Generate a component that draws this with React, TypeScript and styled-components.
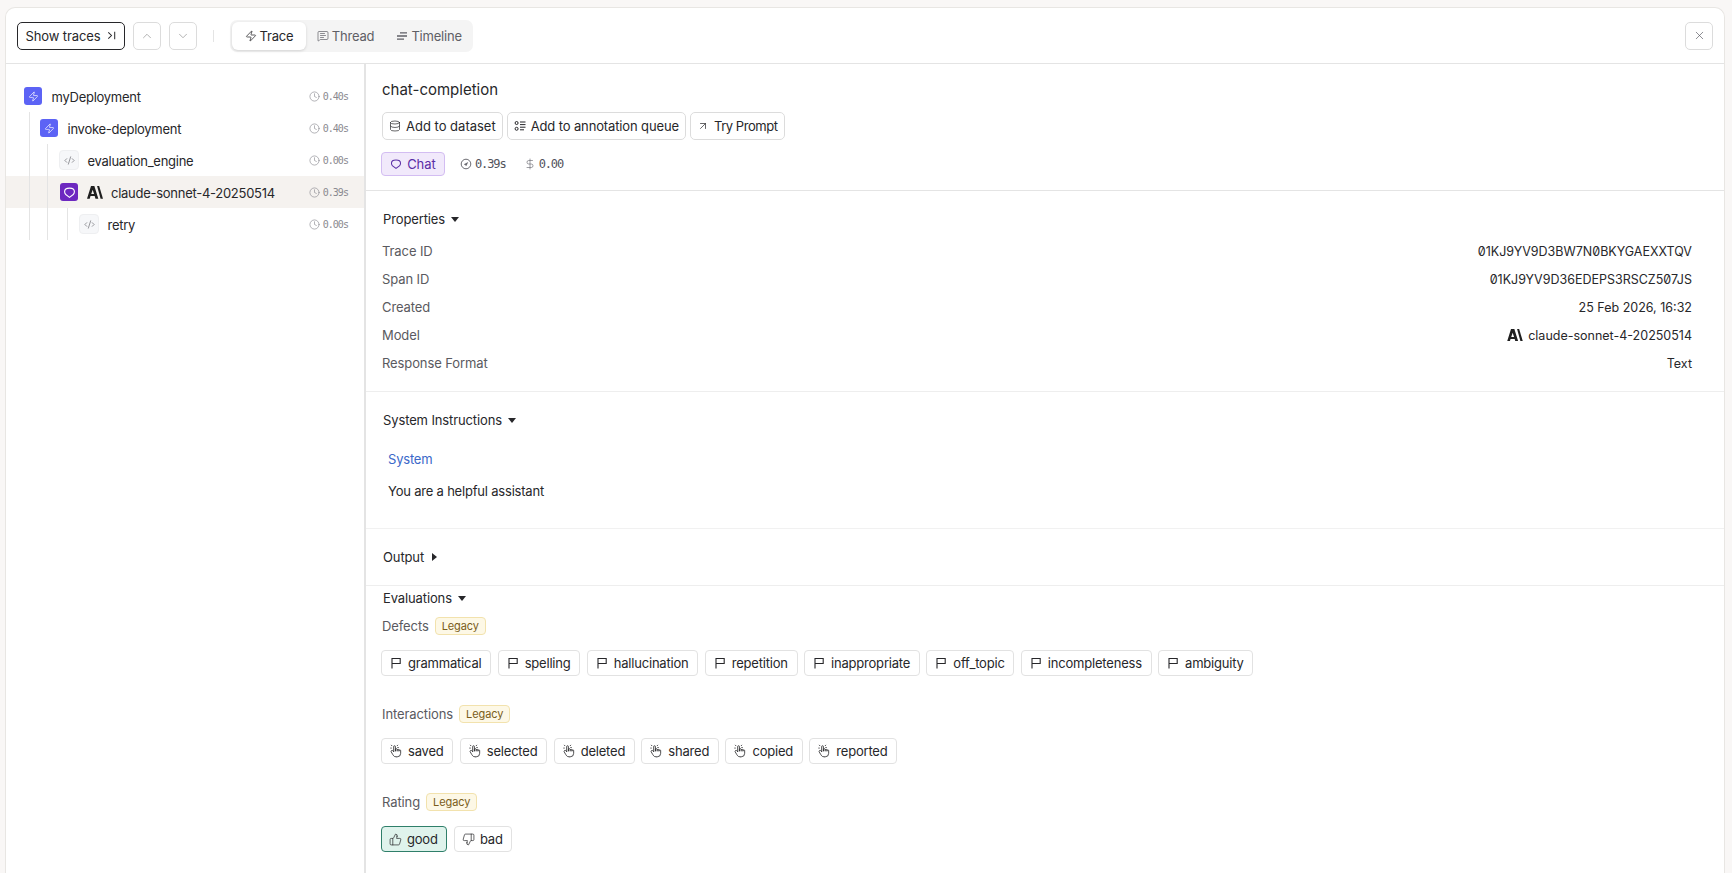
import React from "react";
import styled, { createGlobalStyle } from "styled-components";
import {
  ChevronUp, ChevronDown, X, Zap, MessageSquareText, Database, ArrowUpRight,
  Clock, ThumbsUp, ThumbsDown, CodeXml, DollarSign,
} from "lucide-react";
import { TbHandClick } from "react-icons/tb";

const SANS = `Inter, "Noto Sans", sans-serif`;
const MONO = `"DejaVu Sans Mono", "Liberation Mono", monospace`;

const Global = createGlobalStyle`
  * { box-sizing: border-box; }
  html, body { margin: 0; height: 100%; background: #f9f7f6; overflow: hidden; }
  body { font-family: ${SANS}; color: #27272a; }
`;

const Page = styled.div`
  height: 873px;
  padding: 7px 7px 0 5px;
`;
const Panel = styled.div`
  height: 866px;
  background: #fff;
  border: 1px solid #e8e6e3;
  border-bottom: none;
  border-radius: 10px 10px 0 0;
  display: flex;
  flex-direction: column;
  overflow: hidden;
`;
const TopBar = styled.header`
  height: 56px;
  flex: none;
  border-bottom: 1px solid #e4e4e4;
  display: flex;
  align-items: center;
  padding: 0 11px 0 11px;
`;
const ShowTraces = styled.button`
  height: 28px;
  width: 108px;
  border: 1px solid #27272a;
  border-radius: 5px;
  background: #fff;
  font: 13px ${SANS};
  letter-spacing: -0.1px;
  color: #27272a;
  display: flex;
  align-items: center;
  justify-content: center;
  gap: 5px;
  padding: 0;
`;
const IconButton = styled.button`
  width: 28px;
  height: 28px;
  border: 1px solid #dcdcdc;
  border-radius: 5px;
  background: #fff;
  color: #9a9a9a;
  display: flex;
  align-items: center;
  justify-content: center;
  padding: 0;
  margin-left: 8px;
`;
const CloseButton = styled(IconButton)`
  margin-left: auto;
  color: #52525b;
`;
const VSep = styled.div`
  width: 1px;
  height: 12px;
  background: #e4e4e4;
  margin: 0 16px;
`;
const Tabs = styled.div`
  display: flex;
  align-items: center;
  height: 32px;
  background: #f4f4f4;
  border-radius: 7px;
  padding: 2px;
  width: 243px;
`;
const Tab = styled.div<{ $active?: boolean }>`
  height: 28px;
  display: flex;
  align-items: center;
  gap: 3px;
  padding: 0 ${(p) => (p.$active ? "12.5px" : "11px")};
  border-radius: 6px;
  font-size: 13px;
  letter-spacing: -0.2px;
  color: ${(p) => (p.$active ? "#27272a" : "#5f5f66")};
  background: ${(p) => (p.$active ? "#fff" : "transparent")};
  box-shadow: ${(p) => (p.$active ? "0 1px 3px rgba(0,0,0,.14)" : "none")};
`;
const Body = styled.div`
  flex: 1;
  display: flex;
  min-height: 0;
`;
const TreePane = styled.aside`
  width: 360px;
  flex: none;
  border-right: 2px solid #e4e4e4;
  padding-top: 16px;
  position: relative;
`;
const TreeLine = styled.div<{ $x: number; $top: number }>`
  position: absolute;
  left: ${(p) => p.$x}px;
  top: ${(p) => p.$top}px;
  bottom: calc(100% - 176px);
  width: 1px;
  background: #e4e4e4;
`;
const TreeRow = styled.div<{ $depth: number; $selected?: boolean }>`
  height: 32px;
  display: flex;
  align-items: center;
  padding-left: ${(p) => p.$depth}px;
  padding-right: 16px;
  background: ${(p) => (p.$selected ? "#f5f2ef" : "transparent")};
`;
const SpanIcon = styled.div<{ $kind: "agent" | "code" | "llm" }>`
  width: ${(p) => (p.$kind === "code" ? 20 : 18)}px;
  height: ${(p) => (p.$kind === "code" ? 20 : 18)}px;
  margin-right: ${(p) => (p.$kind === "agent" ? 1 : 0)}px;
  flex: none;
  border-radius: ${(p) => (p.$kind === "code" ? 4 : 3)}px;
  display: flex;
  align-items: center;
  justify-content: center;
  background: ${(p) => (p.$kind === "agent" ? "#5c63f5" : p.$kind === "llm" ? "#6d28c0" : "#f6f7f9")};
  border: 1px solid ${(p) => (p.$kind === "code" ? "#eeeff1" : "transparent")};
  color: ${(p) => (p.$kind === "code" ? "#55555c" : "#fff")};
`;
const SpanName = styled.span`
  display: inline-flex;
  font-size: 13px;
  letter-spacing: -0.27px;
  line-height: 18px;
  padding-top: 1px;
  color: #27272a;
  margin-left: 8.5px;
`;
const Duration = styled.span`
  margin-left: auto;
  display: flex;
  align-items: center;
  gap: 3px;
  font: 10px ${MONO};
  letter-spacing: -0.95px;
  color: #8a8a90;
`;
const Details = styled.main`
  flex: 1;
  min-width: 0;
`;
const Head = styled.section`
  height: 127px;
  border-bottom: 1px solid #e4e4e4;
  padding: 16px 16px 0 16px;
`;
const Title = styled.div`
  font-size: 15px;
  line-height: 20px;
  color: #27272a;
`;
const ActionRow = styled.div`
  display: flex;
  gap: 4px;
  margin-top: 12px;
`;
const Action = styled.button<{ $track?: number }>`
  height: 28px;
  border: 1px solid #dcdcdc;
  border-radius: 5px;
  background: #fff;
  display: flex;
  align-items: center;
  gap: 5px;
  padding: 0 6px 0 6px;
  font: 13px ${SANS};
  letter-spacing: ${(p) => p.$track ?? 0}px;
  color: #27272a;
`;
const MetaRow = styled.div`
  display: flex;
  align-items: center;
  margin-top: 12px;
  margin-left: -1px;
  font: 12px ${MONO};
  letter-spacing: -1.1px;
  color: #52525b;
`;
const ChatChip = styled.div`
  height: 24px;
  width: 64px;
  border: 1px solid #d3bdf2;
  background: #f1e9fb;
  border-radius: 4px;
  display: flex;
  align-items: center;
  justify-content: center;
  gap: 5px;
  font: 13px ${SANS};
  letter-spacing: 0;
  color: #5b2ea6;
  margin-right: 15px;
`;
const Meta = styled.span`
  display: flex;
  align-items: center;
  gap: 3px;
  margin-right: 18px;
  svg { color: #6b6b72; }
`;
const Section = styled.section<{ $h: number; $faint?: boolean; $none?: boolean }>`
  height: ${(p) => p.$h}px;
  border-bottom: ${(p) => (p.$none ? "none" : `1px solid ${p.$faint ? "#f1f1f1" : "#eeeeee"}`)};
  padding: 0 32px 0 16px;
`;
const SectionHead = styled.div<{ $pt: number }>`
  display: flex;
  align-items: center;
  gap: 6px;
  padding: ${(p) => p.$pt}px 0 0 1px;
  font-size: 13px;
  letter-spacing: -0.12px;
  line-height: 18px;
  color: #27272a;
`;
const Caret = styled.span<{ $right?: boolean }>`
  width: 0;
  height: 0;
  ${(p) =>
    p.$right
      ? "border-top: 4.5px solid transparent; border-bottom: 4.5px solid transparent; border-left: 5px solid #27272a; margin-left: 2px;"
      : "border-left: 4.5px solid transparent; border-right: 4.5px solid transparent; border-top: 5px solid #27272a;"}
`;
const PropList = styled.div`
  margin-top: 9px;
`;
const PropRow = styled.div`
  height: 28px;
  display: flex;
  align-items: center;
  justify-content: space-between;
  font-size: 13px;
  letter-spacing: -0.1px;
  color: #5a5a60;
`;
const PropValue = styled.span<{ $id?: boolean }>`
  display: flex;
  align-items: center;
  gap: 5px;
  color: #27272a;
  font-size: 12.5px;
  letter-spacing: 0;
  ${(p) => (p.$id ? `font-feature-settings: "zero" 1;` : "")}
`;
const SystemBlock = styled.div`
  padding: 21px 0 0 6px;
  font-size: 13px;
  letter-spacing: -0.2px;
`;
const RoleLabel = styled.div`
  color: #3b68c9;
  line-height: 18px;
`;
const Message = styled.div`
  color: #27272a;
  line-height: 18px;
  margin-top: 14px;
`;
const EvalGroup = styled.div<{ $mt: number }>`
  margin-top: ${(p) => p.$mt}px;
`;
const EvalHead = styled.div`
  display: flex;
  align-items: center;
  gap: 6px;
  height: 18px;
  font-size: 13px;
  letter-spacing: -0.1px;
  color: #5a5a60;
  line-height: 18px;
`;
const Legacy = styled.span`
  height: 18px;
  border: 1px solid #f2e2ad;
  background: #fdf8e6;
  color: #7a5d1a;
  border-radius: 4px;
  padding: 0 6px;
  font-size: 11px;
  line-height: 15px;
  display: inline-flex;
  align-items: center;
`;
const ChipRow = styled.div`
  display: flex;
  gap: 6.5px;
  margin-top: 15px;
  margin-left: -1px;
`;
const Chip = styled.button<{ $on?: boolean }>`
  height: 26px;
  border: 1px solid ${(p) => (p.$on ? "#2f7f6a" : "#e2e2e2")};
  background: ${(p) => (p.$on ? "#dff3ec" : "#fff")};
  border-radius: 4px;
  display: flex;
  align-items: center;
  gap: 5px;
  padding: 0 8.7px 0 7px;
  font: 13px ${SANS};
  letter-spacing: -0.2px;
  color: #27272a;
`;

const AnthropicLogo = ({ size }: { size: number }) => (
  <svg width={size} height={size * 0.8} viewBox="0 0 20 16" fill="#1f1f1f" aria-hidden>
    <path fillRule="evenodd" d="M5 0h4.2l5 16h-3.6l-1-3.4H4.4L3.4 16H0L5 0zm3.8 10L7.1 4.6 5.3 10h3.5z" />
    <path d="M12.6 0h2.6L20 16h-3L12.6 0z" />
  </svg>
);
const FlagIcon = () => (
  <svg width="14" height="14" viewBox="0 0 14 14" fill="none" stroke="#27272a" strokeWidth="1.1" aria-hidden>
    <path d="M3 12.5V2.5h8.2v5H3" />
  </svg>
);
const LlmGlyph = ({ size = 13, color = "#fff" }: { size?: number; color?: string }) => (
  <svg width={size} height={size} viewBox="0 0 14 14" fill="none" stroke={color} strokeWidth="1.2" aria-hidden>
    <path d="M7 12.2 3 9.2C1.4 7.8 1.2 4.6 3 3.2 4.6 2 9.4 2 11 3.2c1.8 1.4 1.6 4.6 0 6l-4 3z" />
  </svg>
);
const TimelineIcon = () => (
  <svg width="12" height="12" viewBox="0 0 12 12" fill="none" stroke="currentColor" strokeWidth="1.3" aria-hidden>
    <path d="M4 2.8h7M1 6h10M1 9.2h7" />
  </svg>
);
const QueueIcon = () => (
  <svg width="12" height="12" viewBox="0 0 12 12" fill="none" stroke="#27272a" strokeWidth="1" aria-hidden>
    <circle cx="2.6" cy="3" r="1.5" />
    <circle cx="2.6" cy="8.8" r="1.5" />
    <path d="M6 2h5.5M6 4.6h5.5M6 7.2h5.5M6 9.8h4" />
  </svg>
);
const LatencyIcon = () => (
  <svg width="12" height="12" viewBox="0 0 12 12" fill="none" stroke="currentColor" strokeWidth="1" aria-hidden>
    <circle cx="6" cy="6" r="4.8" />
    <path d="M3.8 6.2 8.2 4 6.4 8z" fill="currentColor" stroke="none" />
  </svg>
);

const Dur = ({ v }: { v: string }) => (
  <Duration>
    <Clock size={11} strokeWidth={1.4} />
    {v}
  </Duration>
);

const Chips = ({ items, icon }: { items: string[]; icon: React.ReactNode }) => (
  <ChipRow>
    {items.map((t) => (
      <Chip key={t}>
        {icon}
        {t}
      </Chip>
    ))}
  </ChipRow>
);

export default function App() {
  return (
    <>
      <Global />
      <Page>
        <Panel>
          <TopBar>
            <ShowTraces>
              Show traces
              <svg width="11" height="11" viewBox="0 0 12 12" fill="none" stroke="#27272a" strokeWidth="1.1" aria-hidden>
                <path d="M2.5 2.5 6 6l-3.5 3.5M9.5 2v8" />
              </svg>
            </ShowTraces>
            <IconButton><ChevronUp size={14} strokeWidth={1.3} /></IconButton>
            <IconButton><ChevronDown size={14} strokeWidth={1.3} /></IconButton>
            <VSep />
            <Tabs>
              <Tab $active><Zap size={12} strokeWidth={1.5} />Trace</Tab>
              <Tab><MessageSquareText size={12} strokeWidth={1.4} />Thread</Tab>
              <Tab><TimelineIcon />Timeline</Tab>
            </Tabs>
            <CloseButton><X size={13} strokeWidth={1.2} /></CloseButton>
          </TopBar>
          <Body>
            <TreePane>
              <TreeLine $x={23} $top={48} />
              <TreeLine $x={41} $top={80} />
              <TreeLine $x={61} $top={144} />
              <TreeRow $depth={18}>
                <SpanIcon $kind="agent"><Zap size={11} strokeWidth={1.5} /></SpanIcon>
                <SpanName>myDeployment</SpanName>
                <Dur v="0.40s" />
              </TreeRow>
              <TreeRow $depth={34}>
                <SpanIcon $kind="agent"><Zap size={11} strokeWidth={1.5} /></SpanIcon>
                <SpanName>invoke-deployment</SpanName>
                <Dur v="0.40s" />
              </TreeRow>
              <TreeRow $depth={53}>
                <SpanIcon $kind="code"><CodeXml size={11} strokeWidth={1.3} /></SpanIcon>
                <SpanName>evaluation_engine</SpanName>
                <Dur v="0.00s" />
              </TreeRow>
              <TreeRow $depth={54} $selected>
                <SpanIcon $kind="llm"><LlmGlyph /></SpanIcon>
                <SpanName><AnthropicLogo size={16} /></SpanName>
                <SpanName>claude-sonnet-4-20250514</SpanName>
                <Dur v="0.39s" />
              </TreeRow>
              <TreeRow $depth={73}>
                <SpanIcon $kind="code"><CodeXml size={11} strokeWidth={1.3} /></SpanIcon>
                <SpanName>retry</SpanName>
                <Dur v="0.00s" />
              </TreeRow>
            </TreePane>
            <Details>
              <Head>
                <Title>chat-completion</Title>
                <ActionRow>
                  <Action><Database size={12} strokeWidth={1.4} />Add to dataset</Action>
                  <Action $track={-0.13}><QueueIcon />Add to annotation queue</Action>
                  <Action $track={-0.45}><ArrowUpRight size={12} strokeWidth={1.4} />Try Prompt</Action>
                </ActionRow>
                <MetaRow>
                  <ChatChip><LlmGlyph size={12} color="#5b2ea6" />Chat</ChatChip>
                  <Meta><LatencyIcon />0.39s</Meta>
                  <Meta><DollarSign size={12} strokeWidth={1.3} />0.00</Meta>
                </MetaRow>
              </Head>
              <Section $h={201}>
                <SectionHead $pt={19}>Properties <Caret /></SectionHead>
                <PropList>
                  <PropRow>Trace ID<PropValue $id>01KJ9YV9D3BW7N0BKYGAEXXTQV</PropValue></PropRow>
                  <PropRow>Span ID<PropValue $id>01KJ9YV9D36EDEPS3RSCZ507JS</PropValue></PropRow>
                  <PropRow>Created<PropValue>25 Feb 2026, 16:32</PropValue></PropRow>
                  <PropRow>Model<PropValue><AnthropicLogo size={16} />claude-sonnet-4-20250514</PropValue></PropRow>
                  <PropRow>Response Format<PropValue>Text</PropValue></PropRow>
                </PropList>
              </Section>
              <Section $h={137} $faint>
                <SectionHead $pt={19}>System Instructions <Caret /></SectionHead>
                <SystemBlock>
                  <RoleLabel>System</RoleLabel>
                  <Message>You are a helpful assistant</Message>
                </SystemBlock>
              </Section>
              <Section $h={57}>
                <SectionHead $pt={19}>Output <Caret $right /></SectionHead>
              </Section>
              <Section $h={290} $none>
                <SectionHead $pt={3}>Evaluations <Caret /></SectionHead>
                <EvalGroup $mt={10}>
                  <EvalHead>Defects <Legacy>Legacy</Legacy></EvalHead>
                  <Chips
                    icon={<FlagIcon />}
                    items={["grammatical", "spelling", "hallucination", "repetition", "inappropriate", "off_topic", "incompleteness", "ambiguity"]}
                  />
                </EvalGroup>
                <EvalGroup $mt={29}>
                  <EvalHead>Interactions <Legacy>Legacy</Legacy></EvalHead>
                  <Chips
                    icon={<TbHandClick size={14} strokeWidth={1.4} />}
                    items={["saved", "selected", "deleted", "shared", "copied", "reported"]}
                  />
                </EvalGroup>
                <EvalGroup $mt={29}>
                  <EvalHead>Rating <Legacy>Legacy</Legacy></EvalHead>
                  <ChipRow>
                    <Chip $on><ThumbsUp size={13} strokeWidth={1.3} />good</Chip>
                    <Chip><ThumbsDown size={13} strokeWidth={1.3} />bad</Chip>
                  </ChipRow>
                </EvalGroup>
              </Section>
            </Details>
          </Body>
        </Panel>
      </Page>
    </>
  );
}
